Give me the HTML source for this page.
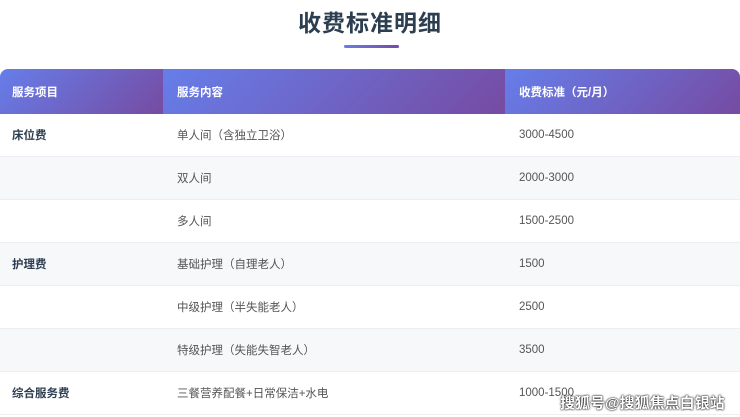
<!DOCTYPE html>
<html><head><meta charset="utf-8"><style>
body{margin:0;width:740px;height:417px;overflow:hidden;background:#fff;font-family:"Liberation Sans","Noto Sans CJK SC",sans-serif;color:#555}
h1{margin:0;position:absolute;top:4px;left:0;width:740px;text-align:center;font-size:23px;font-weight:700;color:#2c3e50;letter-spacing:1px}
.bar{position:absolute;left:344px;top:45px;width:55px;height:3px;border-radius:2px;background:linear-gradient(90deg,#667eea,#764ba2)}
table{position:absolute;top:69px;left:0;width:740px;border-collapse:collapse;font-size:11.5px}
th{height:45px;color:#fff;font-weight:700;text-align:left;padding:0 0 0 14px;background:linear-gradient(135deg,#667eea,#764ba2)}
th:first-child{border-top-left-radius:8px;padding-left:12px}th:last-child{border-top-right-radius:8px}
td{height:42px;padding:0 0 0 14px;border-bottom:1px solid #eceef2;color:#555;background:#fff}
td:first-child{padding-left:12px}
tr.g td{background:#f7f8fa}
td.b{font-weight:700;color:#2c3e50}
.wm{position:absolute;left:560px;top:392px;font-size:15px;font-weight:700;color:#fff;text-shadow:0 0 2px #000,0 0 1px #000;letter-spacing:0}
</style></head><body>
<h1>收费标准明细</h1><div class="bar"></div>
<table>
<tr><th style="width:151px">服务项目</th><th style="width:328px">服务内容</th><th>收费标准（元/月）</th></tr>
<tr><td class="b">床位费</td><td>单人间（含独立卫浴）</td><td>3000-4500</td></tr>
<tr class="g"><td></td><td>双人间</td><td>2000-3000</td></tr>
<tr><td></td><td>多人间</td><td>1500-2500</td></tr>
<tr class="g"><td class="b">护理费</td><td>基础护理（自理老人）</td><td>1500</td></tr>
<tr><td></td><td>中级护理（半失能老人）</td><td>2500</td></tr>
<tr class="g"><td></td><td>特级护理（失能失智老人）</td><td>3500</td></tr>
<tr><td class="b">综合服务费</td><td>三餐营养配餐+日常保洁+水电</td><td>1000-1500</td></tr>
</table>
<div class="wm">搜狐号@搜狐焦点白银站</div>
</body></html>
